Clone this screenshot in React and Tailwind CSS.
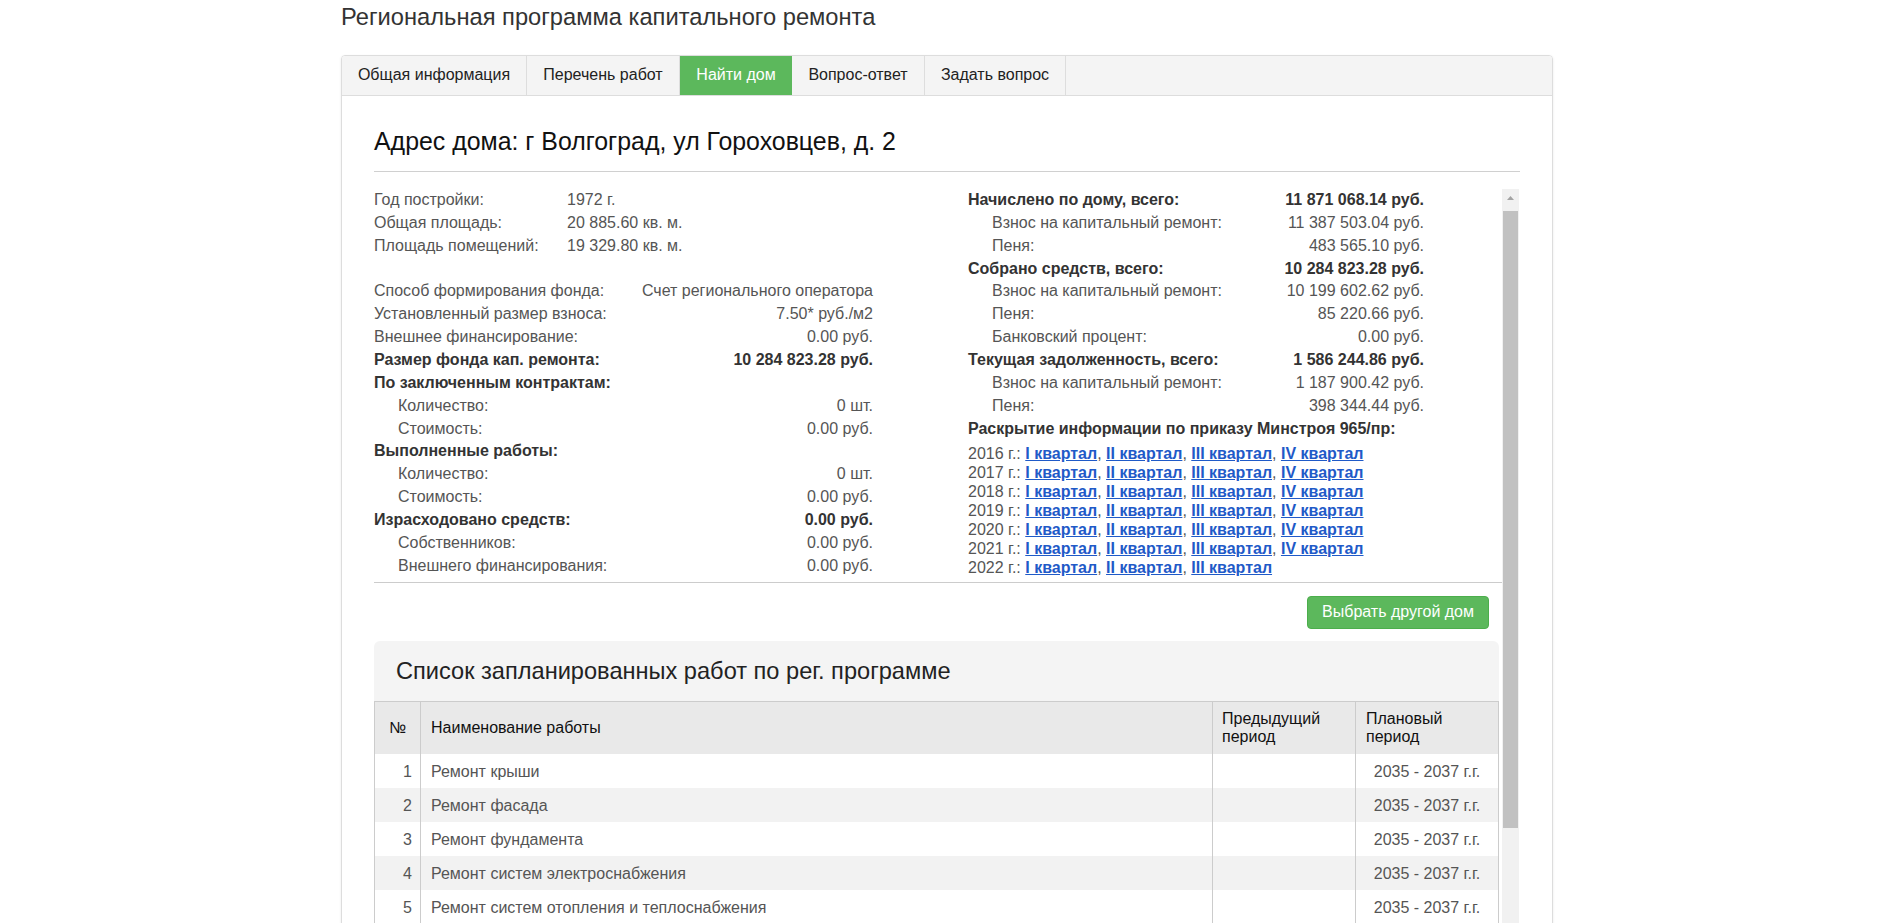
const tabs = [
  { name: "Общая информация", w: "w-[185px]" },
  { name: "Перечень работ", w: "w-[153px]" },
  { name: "Найти дом", w: "w-[112px]", active: true },
  { name: "Вопрос-ответ", w: "w-[133px]" },
  { name: "Задать вопрос", w: "w-[141px]" },
];

const leftTop = [
  ["Год постройки:", "1972 г."],
  ["Общая площадь:", "20 885.60 кв. м."],
  ["Площадь помещений:", "19 329.80 кв. м."],
];

const leftRows = [
  { label: "Способ формирования фонда:", value: "Счет регионального оператора" },
  { label: "Установленный размер взноса:", value: "7.50* руб./м2" },
  { label: "Внешнее финансирование:", value: "0.00 руб." },
  { label: "Размер фонда кап. ремонта:", value: "10 284 823.28 руб.", bold: true },
  { label: "По заключенным контрактам:", value: "", bold: true },
  { label: "Количество:", value: "0 шт.", indent: true },
  { label: "Стоимость:", value: "0.00 руб.", indent: true },
  { label: "Выполненные работы:", value: "", bold: true },
  { label: "Количество:", value: "0 шт.", indent: true },
  { label: "Стоимость:", value: "0.00 руб.", indent: true },
  { label: "Израсходовано средств:", value: "0.00 руб.", bold: true },
  { label: "Собственников:", value: "0.00 руб.", indent: true },
  { label: "Внешнего финансирования:", value: "0.00 руб.", indent: true },
];

const rightRows = [
  { label: "Начислено по дому, всего:", value: "11 871 068.14 руб.", bold: true },
  { label: "Взнос на капитальный ремонт:", value: "11 387 503.04 руб.", indent: true },
  { label: "Пеня:", value: "483 565.10 руб.", indent: true },
  { label: "Собрано средств, всего:", value: "10 284 823.28 руб.", bold: true },
  { label: "Взнос на капитальный ремонт:", value: "10 199 602.62 руб.", indent: true },
  { label: "Пеня:", value: "85 220.66 руб.", indent: true },
  { label: "Банковский процент:", value: "0.00 руб.", indent: true },
  { label: "Текущая задолженность, всего:", value: "1 586 244.86 руб.", bold: true },
  { label: "Взнос на капитальный ремонт:", value: "1 187 900.42 руб.", indent: true },
  { label: "Пеня:", value: "398 344.44 руб.", indent: true },
];

const years = [
  [2016, 4],
  [2017, 4],
  [2018, 4],
  [2019, 4],
  [2020, 4],
  [2021, 4],
  [2022, 3],
];

const quarters = ["I квартал", "II квартал", "III квартал", "IV квартал"];

const works = [
  "Ремонт крыши",
  "Ремонт фасада",
  "Ремонт фундамента",
  "Ремонт систем электроснабжения",
  "Ремонт систем отопления и теплоснабжения",
  "Ремонт систем водоотведения",
];

const InfoRow = ({ label, value, bold, indent }) => (
  <div className={`flex justify-between ${bold ? "font-bold text-[#333]" : "text-[#555]"}`}>
    <span className={indent ? "pl-[24px]" : ""}>{label}</span>
    <span>{value}</span>
  </div>
);

const App = () => {
  return (
    <div className="min-h-[923px] bg-white font-['Liberation_Sans',Arial,sans-serif] text-[16px] leading-[22.86px]">
      <div className="ml-[341px] w-[1212px]">

        {/* Title */}

        <h1 className="pt-[3px] text-[23.7px] leading-[28px] font-normal text-[#333]">
          Региональная программа капитального ремонта
        </h1>

        {/* Panel */}

        <div className="mt-[24px] border border-[#ddd] rounded-[4px] shadow-[0_1px_3px_rgba(0,0,0,0.08)] overflow-hidden">

          {/* Tabs */}

          <div className="flex h-[40px] bg-[#f4f4f4] border-b border-[#ddd]">
            {tabs.map((t) => (
              <div
                key={t.name}
                className={`flex items-center justify-center whitespace-nowrap ${t.w} ${
                  t.active ? "bg-[#5cb85c] text-white" : "text-[#222] border-r border-[#ddd]"
                }`}
              >
                {t.name}
              </div>
            ))}
          </div>

          {/* Body */}

          <div className="px-[32px] pt-[31px]">

            <h2 className="text-[24.9px] leading-[28px] font-normal text-[#111]">
              Адрес дома: г Волгоград, ул Гороховцев, д. 2
            </h2>

            <div className="mt-[16px] border-t border-[#d0d0d0]" />

            <div className="mt-[17px] flex h-[745px] overflow-hidden">

              <div className="w-[1128px] overflow-hidden">

                <div className="flex">

                  {/* Left column */}

                  <div className="w-[499px]">
                    {leftTop.map(([l, v]) => (
                      <div key={l} className="flex text-[#555]">
                        <span className="w-[193px]">{l}</span>
                        <span>{v}</span>
                      </div>
                    ))}
                    <div className="h-[22.86px]" />
                    {leftRows.map((r, i) => (
                      <InfoRow key={i} {...r} />
                    ))}
                  </div>

                  {/* Right column */}

                  <div className="ml-[95px] w-[456px]">
                    {rightRows.map((r, i) => (
                      <InfoRow key={i} {...r} />
                    ))}
                    <div className="font-bold text-[#333] whitespace-nowrap">
                      Раскрытие информации по приказу Минстроя 965/пр:
                    </div>
                    <div className="mt-[4px] leading-[19px] text-[#555] whitespace-nowrap">
                      {years.map(([y, n]) => (
                        <div key={y}>
                          {y} г.:{" "}
                          {quarters.slice(0, n).map((q, i) => (
                            <span key={q}>
                              <a href="#" className="font-bold text-[#1f5ac8] underline">
                                {q}
                              </a>
                              {i < n - 1 ? ", " : ""}
                            </span>
                          ))}
                        </div>
                      ))}
                    </div>
                  </div>

                </div>

                <div className="mt-[4px] border-t border-[#ccc]" />

                <div className="mt-[13px] flex justify-end pr-[13px]">
                  <button className="h-[33px] px-[14px] rounded-[4px] bg-[#5cb85c] border border-[#4cae4c] text-white">
                    Выбрать другой дом
                  </button>
                </div>

                {/* Works list */}

                <div className="mt-[12px] mr-[3px] bg-[#f4f4f4] rounded-t-[6px]">

                  <div className="h-[60px] flex items-center pl-[22px] text-[23.6px] leading-[28px] text-[#222]">
                    Список запланированных работ по рег. программе
                  </div>

                  <table className="w-full table-fixed border-collapse">
                    <colgroup>
                      <col className="w-[46px]" />
                      <col />
                      <col className="w-[143px]" />
                      <col className="w-[143px]" />
                    </colgroup>
                    <thead>
                      <tr className="bg-[#e9e9e9] text-[#111] leading-[18px]">
                        <th className="h-[53px] border-l border-t border-[#ccc] font-normal text-center align-middle">
                          №
                        </th>
                        <th className="border-l border-t border-[#ccc] font-normal text-left pl-[10px] align-middle">
                          Наименование работы
                        </th>
                        <th className="border-l border-t border-[#ccc] font-normal text-left pl-[9px] align-middle">
                          Предыдущий
                          <br />
                          период
                        </th>
                        <th className="border-l border-r border-t border-[#ccc] font-normal text-left pl-[10px] align-middle">
                          Плановый
                          <br />
                          период
                        </th>
                      </tr>
                    </thead>
                    <tbody className="text-[#555]">
                      {works.map((w, i) => (
                        <tr key={w} className={i % 2 === 1 ? "bg-[#f2f2f2]" : "bg-white"}>
                          <td className="h-[34px] pt-[2px] border-l border-[#ccc] text-right pr-[8px]">{i + 1}</td>
                          <td className="pt-[2px] border-l border-[#ccc] pl-[10px]">{w}</td>
                          <td className="border-l border-[#ccc]" />
                          <td className="pt-[2px] border-l border-r border-[#ccc] text-center">2035 - 2037 г.г.</td>
                        </tr>
                      ))}
                    </tbody>
                  </table>

                </div>

              </div>

              {/* Scrollbar */}

              <div className="w-[17px] bg-[#f1f1f1] flex flex-col items-center">
                <div className="h-[17px] w-full flex items-center justify-center">
                  <svg width="7" height="4" viewBox="0 0 7 4">
                    <path d="M3.5 0L7 4H0z" fill="#a3a3a3" />
                  </svg>
                </div>
                <div className="mt-[5px] h-[617px] w-[15px] bg-[#c1c1c1]" />
              </div>

            </div>

          </div>

        </div>

      </div>
    </div>
  );
};

export default App;
